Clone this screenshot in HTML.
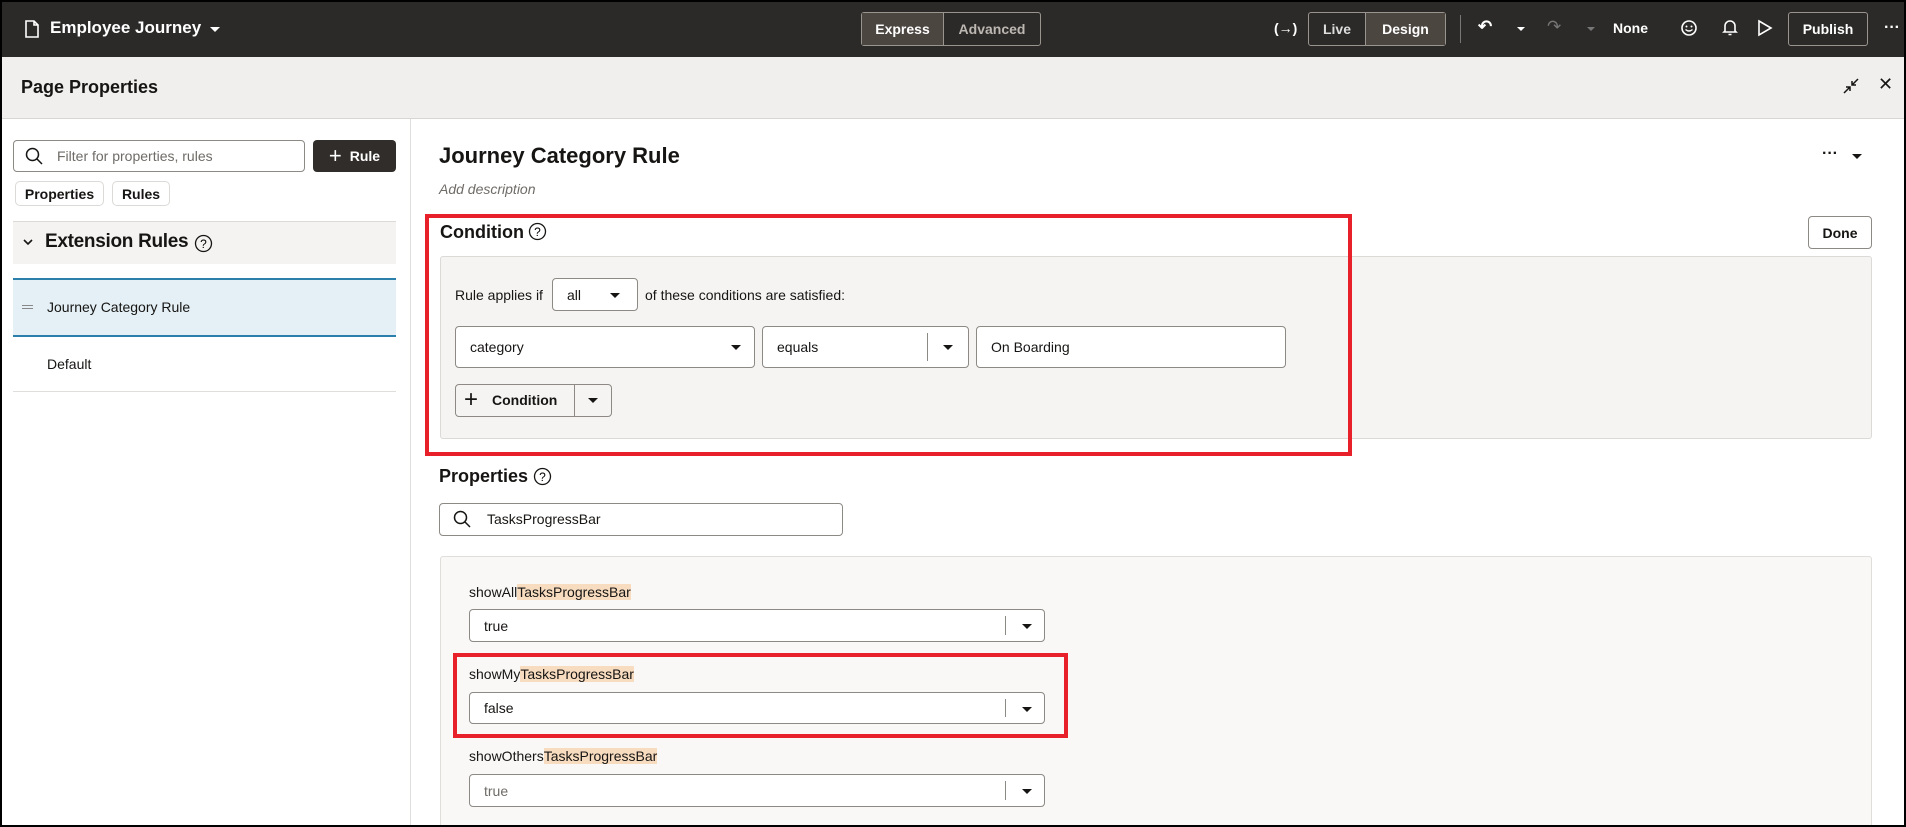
<!DOCTYPE html>
<html><head><meta charset="utf-8"><style>
*{box-sizing:border-box;margin:0;padding:0}
html,body{width:1906px;height:827px;overflow:hidden}
body{font-family:"Liberation Sans",sans-serif;color:#161513;background:#fff;position:relative;font-size:14px}
.a{position:absolute}
.hdr{left:0;top:0;width:1906px;height:57px;background:#2b2a28;color:#fff;border:2px solid #000;border-bottom:none}
.pp{left:0;top:57px;width:1906px;height:62px;background:#f0efed;border-bottom:1px solid #d8d6d3}
.box{border:1px solid #8d8985;border-radius:4px;background:#fff}
.tri{width:0;height:0;border-left:5px solid transparent;border-right:5px solid transparent;border-top:5px solid #161513}
.hl{background:#f8dcc0}
.lbl{font-size:14px}
.sel .v{position:absolute;left:14px;top:50%;transform:translateY(-50%)}
.sep{position:absolute;top:6px;bottom:6px;width:1px;background:#8d8985}
</style></head><body>
<div class="a hdr">
 <svg class="a" style="left:23px;top:18px" width="14" height="18" viewBox="0 0 14 18"><path d="M1 1h8l4 4v12H1z M9 1v4h4" fill="none" stroke="#fff" stroke-width="1.6"/></svg>
 <div class="a" style="left:48px;top:16px;font-size:17px;font-weight:bold">Employee Journey</div>
 <div class="a tri" style="left:208px;top:25px;border-top-color:#fff"></div>
 <div class="a" style="left:859px;top:10px;width:180px;height:34px;border:1px solid #9a948f;border-radius:3px;display:flex;font-size:14px;font-weight:bold">
  <div style="width:82px;background:#4c4641;display:flex;align-items:center;justify-content:center;border-right:1px solid #9a948f">Express</div>
  <div style="flex:1;display:flex;align-items:center;justify-content:center;color:#bdb7b2">Advanced</div></div>
 <div class="a" style="left:1272px;top:18px;font-size:14px;font-weight:bold">(→)</div>
 <div class="a" style="left:1306px;top:10px;width:138px;height:34px;border:1px solid #9a948f;border-radius:3px;display:flex;font-size:14px;font-weight:bold">
  <div style="width:57px;display:flex;align-items:center;justify-content:center;color:#ddd;border-right:1px solid #9a948f">Live</div>
  <div style="flex:1;background:#4c4641;display:flex;align-items:center;justify-content:center">Design</div></div>
 <div class="a" style="left:1458px;top:13px;width:1px;height:28px;background:#777"></div>
 <div class="a" style="left:1476px;top:15px;font-size:17px;font-weight:bold">↶</div>
 <div class="a tri" style="left:1515px;top:25px;border-top-color:#fff;border-width:4px 4px 0"></div>
 <div class="a" style="left:1545px;top:15px;font-size:17px;color:#777">↷</div>
 <div class="a tri" style="left:1585px;top:25px;border-top-color:#777;border-width:4px 4px 0"></div>
 <div class="a" style="left:1611px;top:18px;font-size:14px;font-weight:bold">None</div>
 <svg class="a" style="left:1678px;top:17px" width="18" height="18" viewBox="0 0 18 18"><circle cx="9" cy="9" r="7" fill="none" stroke="#fff" stroke-width="1.6"/><circle cx="6.5" cy="7.5" r="1" fill="#fff"/><circle cx="11.5" cy="7.5" r="1" fill="#fff"/><path d="M5.5 10.5q3.5 3 7 0" fill="none" stroke="#fff" stroke-width="1.4"/></svg>
 <svg class="a" style="left:1720px;top:16px" width="16" height="19" viewBox="0 0 16 19"><path d="M3 13V8a5 5 0 0110 0v5l1 1H2z M6.5 16.5h3" fill="none" stroke="#fff" stroke-width="1.6"/></svg>
 <svg class="a" style="left:1755px;top:17px" width="16" height="18" viewBox="0 0 16 18"><path d="M2 2l12 7-12 7z" fill="none" stroke="#fff" stroke-width="1.6"/></svg>
 <div class="a" style="left:1786px;top:10px;width:80px;height:34px;border:1px solid #9a948f;border-radius:3px;font-size:14px;font-weight:bold;display:flex;align-items:center;justify-content:center">Publish</div>
 <div class="a" style="left:1882px;top:17px;font-size:16px;font-weight:bold">···</div>
</div>
<div class="a pp">
 <div class="a" style="left:21px;top:20px;font-size:18px;font-weight:bold">Page Properties</div>
 <svg class="a" style="left:1842px;top:20px" width="18" height="18" viewBox="0 0 18 18"><path d="M16 2l-6 6M10 4v4h4 M2 16l6-6M4 10h4v4" fill="none" stroke="#161513" stroke-width="1.5"/></svg>
 <div class="a" style="left:1878px;top:17px;font-size:18px">✕</div>
</div>
<div class="a" style="left:410px;top:119px;width:1px;height:708px;background:#e0dedb"></div>
<!-- left -->
<div class="a box" style="left:13px;top:140px;width:292px;height:32px"></div>
<svg class="a" style="left:25px;top:147px" width="18" height="18" viewBox="0 0 18 18"><circle cx="7.5" cy="7.5" r="6" fill="none" stroke="#161513" stroke-width="1.5"/><path d="M12 12l5 5" stroke="#161513" stroke-width="1.5"/></svg>
<div class="a" style="left:57px;top:148px;color:#6f6b67;font-size:14px">Filter for properties, rules</div>
<div class="a" style="left:313px;top:140px;width:83px;height:32px;background:#312d2a;border-radius:4px;color:#fff;font-weight:bold;font-size:14px;display:flex;align-items:center;justify-content:center"><span style="font-size:22px;font-weight:normal;margin-right:8px;line-height:1">+</span>Rule</div>
<div class="a" style="left:15px;top:181px;width:89px;height:25px;border:1px solid #dcdad7;border-radius:5px;font-size:14px;font-weight:bold;display:flex;align-items:center;justify-content:center">Properties</div>
<div class="a" style="left:112px;top:181px;width:58px;height:25px;border:1px solid #dcdad7;border-radius:5px;font-size:14px;font-weight:bold;display:flex;align-items:center;justify-content:center">Rules</div>
<div class="a" style="left:13px;top:221px;width:383px;height:43px;background:#f4f3f1;border-top:1px solid #dcdad7"></div>
<svg class="a" style="left:22px;top:237px" width="12" height="10" viewBox="0 0 12 10"><path d="M2 3l4 4 4-4" fill="none" stroke="#161513" stroke-width="1.6"/></svg>
<div class="a" style="left:45px;top:231px;font-size:19px;font-weight:bold;letter-spacing:-0.3px">Extension Rules</div>
<svg class="a" style="left:194px;top:234px" width="19" height="19" viewBox="0 0 19 19"><circle cx="9.5" cy="9.5" r="8" fill="none" stroke="#161513" stroke-width="1.3"/><text x="9.5" y="14" text-anchor="middle" font-size="12" font-family="Liberation Sans">?</text></svg>
<div class="a" style="left:13px;top:278px;width:383px;height:59px;background:#e4f0f5;border-top:2px solid #2a7fab;border-bottom:2px solid #2a7fab"></div>
<div class="a" style="left:22px;top:305px;width:11px;height:1px;background:#888;box-shadow:0 3px 0 #888"></div>
<div class="a" style="left:47px;top:299px;font-size:14px">Journey Category Rule</div>
<div class="a" style="left:47px;top:356px;font-size:14px">Default</div>
<div class="a" style="left:13px;top:391px;width:383px;height:1px;background:#e0dedb"></div>
<!-- right -->
<div class="a" style="left:439px;top:143px;font-size:22px;font-weight:bold">Journey Category Rule</div>
<div class="a" style="left:439px;top:181px;font-size:14px;font-style:italic;color:#6f6b67">Add description</div>
<div class="a" style="left:1822px;top:145px;font-size:16px;font-weight:bold">···</div>
<div class="a tri" style="left:1852px;top:154px"></div>
<div class="a" style="left:440px;top:222px;font-size:18px;font-weight:bold">Condition</div>
<svg class="a" style="left:528px;top:222px" width="19" height="19" viewBox="0 0 19 19"><circle cx="9.5" cy="9.5" r="8" fill="none" stroke="#161513" stroke-width="1.3"/><text x="9.5" y="14" text-anchor="middle" font-size="12" font-family="Liberation Sans">?</text></svg>
<div class="a" style="left:1808px;top:216px;width:64px;height:33px;border:1px solid #8d8985;border-radius:4px;font-size:14px;font-weight:bold;display:flex;align-items:center;justify-content:center">Done</div>
<div class="a" style="left:440px;top:256px;width:1432px;height:183px;background:#f5f4f2;border:1px solid #dcdad7;border-radius:3px"></div>
<div class="a" style="left:455px;top:287px;font-size:14px">Rule applies if</div>
<div class="a box sel" style="left:552px;top:278px;width:86px;height:33px"><span class="v">all</span><div class="a tri" style="left:57px;top:14px"></div></div>
<div class="a" style="left:645px;top:287px;font-size:14px">of these conditions are satisfied:</div>
<div class="a box sel" style="left:455px;top:326px;width:300px;height:42px"><span class="v">category</span><div class="a tri" style="left:275px;top:18px"></div></div>
<div class="a box sel" style="left:762px;top:326px;width:207px;height:42px"><span class="v">equals</span><div class="sep" style="left:164px"></div><div class="a tri" style="left:180px;top:18px"></div></div>
<div class="a box sel" style="left:976px;top:326px;width:310px;height:42px"><span class="v">On Boarding</span></div>
<div class="a" style="left:455px;top:384px;width:157px;height:33px;border:1px solid #8d8985;border-radius:4px;background:#f5f4f2"></div>
<div class="a" style="left:574px;top:384px;width:1px;height:33px;background:#8d8985"></div>
<div class="a" style="left:464px;top:388px;font-size:24px;line-height:1">+</div>
<div class="a" style="left:492px;top:392px;font-size:14px;font-weight:bold">Condition</div>
<div class="a tri" style="left:588px;top:398px"></div>
<div class="a" style="left:425px;top:214px;width:927px;height:242px;border:4px solid #e8202a"></div>
<div class="a" style="left:439px;top:466px;font-size:18px;font-weight:bold">Properties</div>
<svg class="a" style="left:533px;top:467px" width="19" height="19" viewBox="0 0 19 19"><circle cx="9.5" cy="9.5" r="8" fill="none" stroke="#161513" stroke-width="1.3"/><text x="9.5" y="14" text-anchor="middle" font-size="12" font-family="Liberation Sans">?</text></svg>
<div class="a box" style="left:439px;top:503px;width:404px;height:33px"></div>
<svg class="a" style="left:453px;top:510px" width="18" height="18" viewBox="0 0 18 18"><circle cx="7.5" cy="7.5" r="6" fill="none" stroke="#161513" stroke-width="1.5"/><path d="M12 12l5 5" stroke="#161513" stroke-width="1.5"/></svg>
<div class="a" style="left:487px;top:511px;font-size:14px">TasksProgressBar</div>
<div class="a" style="left:440px;top:556px;width:1432px;height:269px;background:#f9f8f6;border:1px solid #e0dedb;border-bottom:none;border-radius:3px 3px 0 0"></div>
<div class="a lbl" style="left:469px;top:584px">showAll<span class="hl">TasksProgressBar</span></div>
<div class="a box sel" style="left:469px;top:609px;width:576px;height:33px"><span class="v">true</span><div class="sep" style="left:535px"></div><div class="a tri" style="left:552px;top:14px"></div></div>
<div class="a lbl" style="left:469px;top:666px">showMy<span class="hl">TasksProgressBar</span></div>
<div class="a box sel" style="left:469px;top:692px;width:576px;height:32px"><span class="v">false</span><div class="sep" style="left:535px"></div><div class="a tri" style="left:552px;top:14px"></div></div>
<div class="a" style="left:453px;top:653px;width:615px;height:85px;border:4px solid #e8202a"></div>
<div class="a lbl" style="left:469px;top:748px">showOthers<span class="hl">TasksProgressBar</span></div>
<div class="a box sel" style="left:469px;top:774px;width:576px;height:33px"><span class="v" style="color:#6f6b67">true</span><div class="sep" style="left:535px"></div><div class="a tri" style="left:552px;top:14px"></div></div>
<div class="a" style="left:0;top:57px;width:2px;height:770px;background:#000"></div>
<div class="a" style="left:1904px;top:57px;width:2px;height:770px;background:#000"></div>
<div class="a" style="left:0;top:825px;width:1906px;height:2px;background:#000"></div>
</body></html>
